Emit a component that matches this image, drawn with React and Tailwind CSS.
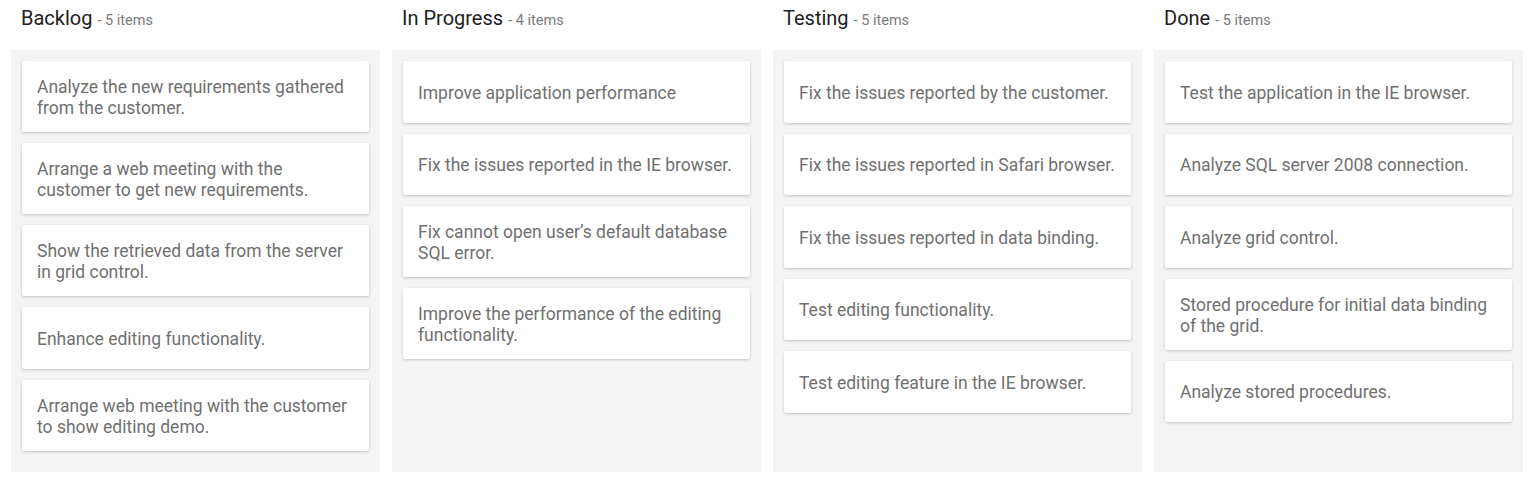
import React from "react";

const columns = [
  {
    title: "Backlog",
    cards: [
      "Analyze the new requirements gathered from the customer.",
      "Arrange a web meeting with the customer to get new requirements.",
      "Show the retrieved data from the server in grid control.",
      "Enhance editing functionality.",
      "Arrange web meeting with the customer to show editing demo.",
    ],
  },
  {
    title: "In Progress",
    cards: [
      "Improve application performance",
      "Fix the issues reported in the IE browser.",
      "Fix cannot open user\u2019s default database SQL error.",
      "Improve the performance of the editing functionality.",
    ],
  },
  {
    title: "Testing",
    cards: [
      "Fix the issues reported by the customer.",
      "Fix the issues reported in Safari browser.",
      "Fix the issues reported in data binding.",
      "Test editing functionality.",
      "Test editing feature in the IE browser.",
    ],
  },
  {
    title: "Done",
    cards: [
      "Test the application in the IE browser.",
      "Analyze SQL server 2008 connection.",
      "Analyze grid control.",
      "Stored procedure for initial data binding of the grid.",
      "Analyze stored procedures.",
    ],
  },
];

const Card = ({ text }) => (
  <div className="bg-white rounded-[2px] shadow-[0_1px_3px_rgba(0,0,0,0.2)] min-h-[61.5px] flex items-center px-[15px] pt-[16px] pb-[13px]">
    <p className="text-[17.5px] leading-[21px] text-[#707070]">{text}</p>
  </div>
);

export default function App() {
  return (
    <div
      className="w-[1532px] h-[481px] bg-white grid grid-cols-4 gap-[12px] pl-[11px] pr-[9px]"
      style={{ fontFamily: "Roboto, 'Noto Sans', sans-serif" }}
    >
      {columns.map((col) => (
        <div key={col.title} className="flex flex-col">
          {/* ====== header ====== */}
          <div className="h-[50px] flex items-baseline pl-[10px] pt-[5px]">
            <span className="text-[20px] leading-[26px] text-[#212121]">{col.title}</span>
            <span className="text-[14.5px] text-[#7a7a7a] ml-[5px]">
              - {col.cards.length} items
            </span>
          </div>
          {/* ====== body ====== */}
          <div className="h-[422px] bg-[#f4f4f4] p-[11px] flex flex-col gap-[11px]">
            {col.cards.map((c, i) => (
              <Card key={i} text={c} />
            ))}
          </div>
        </div>
      ))}
    </div>
  );
}
